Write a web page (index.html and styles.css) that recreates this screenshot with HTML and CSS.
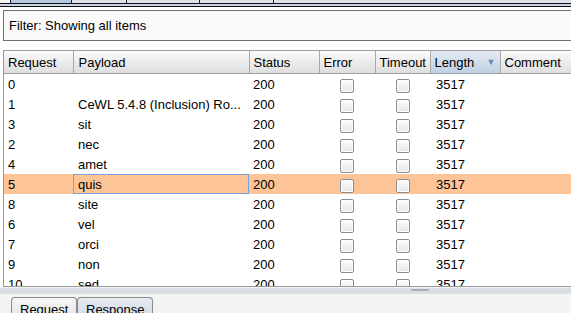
FILE: index.html
```html
<!DOCTYPE html>
<html lang="en">

<head>
    <meta charset="UTF-8">
    <meta name="viewport" content="width=device-width, initial-scale=1.0">
    <title>Intruder Results</title>
    <link rel="stylesheet" href="styles.css">
</head>

<body>
    <div class="tabstrip">
        <div class="tabs">
            <div class="tab tab-first"></div>
            <div class="tab tab-active"></div>
            <div class="tab" style="width: 54px"></div>
            <div class="tab" style="width: 72px"></div>
            <div class="tab" style="width: 73px"></div>
            <div class="tab tab-rest"></div>
        </div>
        <div class="tabline"></div>
    </div>

    <div class="filter">Filter: Showing all items</div>

    <div class="grid">
        <table class="results">
            <colgroup>
                <col style="width: 69px">
                <col style="width: 176px">
                <col style="width: 70px">
                <col style="width: 56px">
                <col style="width: 55px">
                <col style="width: 70px">
                <col>
            </colgroup>
            <thead>
                <tr>
                    <th>Request</th>
                    <th class="pl">Payload</th>
                    <th>Status</th>
                    <th>Error</th>
                    <th>Timeout</th>
                    <th class="sorted">Length <span class="arrow">&#9660;</span></th>
                    <th>Comment</th>
                </tr>
            </thead>
            <tbody>
                <tr><td>0</td><td class="pl"></td><td>200</td><td class="chk"><span class="box"></span></td><td class="chk"><span class="box"></span></td><td class="len">3517</td><td></td></tr>
                <tr><td>1</td><td class="pl">CeWL 5.4.8 (Inclusion) Ro...</td><td>200</td><td class="chk"><span class="box"></span></td><td class="chk"><span class="box"></span></td><td class="len">3517</td><td></td></tr>
                <tr><td>3</td><td class="pl">sit</td><td>200</td><td class="chk"><span class="box"></span></td><td class="chk"><span class="box"></span></td><td class="len">3517</td><td></td></tr>
                <tr><td>2</td><td class="pl">nec</td><td>200</td><td class="chk"><span class="box"></span></td><td class="chk"><span class="box"></span></td><td class="len">3517</td><td></td></tr>
                <tr><td>4</td><td class="pl">amet</td><td>200</td><td class="chk"><span class="box"></span></td><td class="chk"><span class="box"></span></td><td class="len">3517</td><td></td></tr>
                <tr class="selected"><td>5</td><td class="pl focus">quis</td><td>200</td><td class="chk"><span class="box"></span></td><td class="chk"><span class="box"></span></td><td class="len">3517</td><td></td></tr>
                <tr><td>8</td><td class="pl">site</td><td>200</td><td class="chk"><span class="box"></span></td><td class="chk"><span class="box"></span></td><td class="len">3517</td><td></td></tr>
                <tr><td>6</td><td class="pl">vel</td><td>200</td><td class="chk"><span class="box"></span></td><td class="chk"><span class="box"></span></td><td class="len">3517</td><td></td></tr>
                <tr><td>7</td><td class="pl">orci</td><td>200</td><td class="chk"><span class="box"></span></td><td class="chk"><span class="box"></span></td><td class="len">3517</td><td></td></tr>
                <tr><td>9</td><td class="pl">non</td><td>200</td><td class="chk"><span class="box"></span></td><td class="chk"><span class="box"></span></td><td class="len">3517</td><td></td></tr>
                <tr><td>10</td><td class="pl">sed</td><td>200</td><td class="chk"><span class="box"></span></td><td class="chk"><span class="box"></span></td><td class="len">3517</td><td></td></tr>
            </tbody>
        </table>
    </div>

    <div class="splitter"><span class="grip"></span></div>

    <div class="bottom">
        <div class="btab">Request</div>
        <div class="btab btab-on">Response</div>
    </div>
</body>

</html>
```

FILE: styles.css
```css
body {
    margin: 0;
    width: 571px;
    height: 313px;
    overflow: hidden;
    background-color: #fff;
    font-family: "Liberation Sans", Arial, sans-serif;
    font-size: 13px;
    color: #000;
}

/* top tab strip (cut off) */
.tabstrip {
    height: 7px;
}

.tabs {
    display: flex;
    height: 3px;
    border-bottom: 1px solid #111;
    background-color: #dfe3ec;
}

.tabline {
    height: 2px;
    background-color: #c8d5e8;
    border-bottom: 1px solid #111;
}

.tab {
    height: 3px;
    border-right: 1px solid #222;
}

.tab-first {
    width: 10px;
    background-color: #f4f4f4;
}

.tab-active {
    width: 60px;
    background-color: #b7c9de;
}

.tab-rest {
    flex: 1;
    border-right: none;
}

.filter {
    margin: 3px 0 0 3px;
    height: 29px;
    line-height: 29px;
    padding-left: 5px;
    border: 1px solid #6e6e6e;
    border-right: none;
    background-color: #fafafa;
    white-space: nowrap;
}

/* results grid */
.grid {
    margin: 9px 0 0 3px;
    height: 235px;
    overflow: hidden;
    border-top: 1px solid #9a9a9a;
    border-left: 1px solid #9a9a9a;
    border-bottom: 1px solid #9a9a9a;
}

.results {
    width: 568px;
    table-layout: fixed;
    border-collapse: collapse;
}

.results th {
    height: 22px;
    padding: 0 0 0 4px;
    text-align: left;
    font-weight: normal;
    white-space: nowrap;
    overflow: hidden;
    background: linear-gradient(#fbfbfb, #e9e9e9 60%, #dedede);
    border-right: 1px solid #a8a8a8;
    border-bottom: 1px solid #a0a0a0;
}

.results th.sorted {
    position: relative;
    background: linear-gradient(#e3ebf4, #cddbe9 60%, #bfd0e2);
}

.arrow {
    position: absolute;
    right: 4px;
    top: 6px;
    font-size: 9px;
    color: #6d8cb6;
}

.results td {
    height: 20px;
    padding: 0 0 0 4px;
    white-space: nowrap;
    overflow: hidden;
}

.results .pl {
    padding-left: 5px;
}

.results td.len {
    padding-left: 6px;
}

.results td.chk {
    padding: 0;
    text-align: center;
}

.box {
    display: inline-block;
    width: 12px;
    height: 12px;
    margin-top: 4px;
    vertical-align: top;
    border: 1px solid #8c8c8c;
    border-radius: 2px;
    background: linear-gradient(#fdfdfd, #e4e6ea);
    box-shadow: inset 0 0 0 1px #fff;
}

.results tr.selected td {
    background-color: #fdc597;
}

.results td.focus {
    box-shadow: inset 0 0 0 1px #7ea3d3;
}

.splitter {
    height: 6px;
    border-top: 1px solid #f2f3f5;
    background-color: #d9dde4;
    position: relative;
}

.grip {
    position: absolute;
    left: 411px;
    top: 1px;
    width: 18px;
    height: 2px;
    border-radius: 1px;
    background-color: #a8adb6;
}

.bottom {
    display: flex;
    height: 20px;
    padding: 3px 0 0 11px;
    background-color: #f3f3f3;
}

.btab {
    height: 16px;
    padding: 4px 0 0 8px;
    width: 56px;
    border: 1px solid #8a8a8a;
    border-bottom: none;
    border-radius: 4px 4px 0 0;
    background: linear-gradient(#f6f6f6, #e6e6e6);
}

.btab-on {
    width: 66px;
    background: linear-gradient(#e6ebf2, #d3dae4);
}
```
